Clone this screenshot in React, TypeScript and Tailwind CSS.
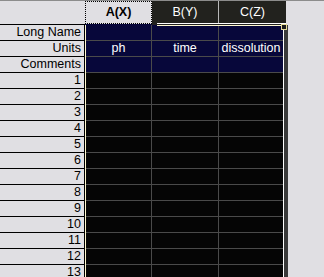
import React from 'react';

const labels = ['Long Name', 'Units', 'Comments', ...Array.from({ length: 14 }, (_, i) => String(i + 1))];

const units: Record<string, string[]> = {
  Units: ['ph', 'time', 'dissolution'],
};

function Row({ label, idx }: { label: string; idx: number }) {
  const meta = idx < 3;
  const bg = meta ? 'bg-[#07073a]' : 'bg-[#050505]';
  const vals = units[label] ?? ['', '', ''];
  return (
    <div className="flex h-[16px]">
      <div className="w-[85px] shrink-0 border-r border-b border-black bg-[#e0dfe3] pr-[3px] text-right text-[12.5px] leading-[15px] text-black">
        {label}
      </div>
      <div className="w-[1px] shrink-0 bg-[#fff8d0]" />
      <div className={`w-[66px] shrink-0 border-r border-b border-[#4a4a4a] ${bg} text-center text-[12.5px] leading-[15px] text-white`}>
        {vals[0]}
      </div>
      <div className={`w-[67px] shrink-0 border-r border-b border-[#4a4a4a] ${bg} text-center text-[12.5px] leading-[15px] text-white`}>
        {vals[1]}
      </div>
      <div className={`flex w-[64px] shrink-0 justify-center overflow-hidden whitespace-nowrap border-b border-[#4a4a4a] ${bg} text-[12.5px] leading-[15px] text-white`}>
        <span className="shrink-0">{vals[2]}</span>
      </div>
      <div className="w-[1px] shrink-0 bg-white" />
      <div className="w-[4px] shrink-0 bg-[#3a3a3a]" />
      <div className="flex-1 bg-[#e0dfe3]" />
    </div>
  );
}

export default function App() {
  return (
    <div
      className="relative h-[277px] w-[324px] overflow-hidden border-t border-[#8c8c8c] bg-[#e0dfe3]"
      style={{ fontFamily: '"Liberation Sans", Arial, sans-serif' }}
    >
      {/* column headers */}
      <div className="flex h-[24px]">
        <div className="w-[85px] shrink-0 border-b border-black" />
        <div className="flex w-[67px] shrink-0 flex-col">
          <div className="flex h-[23px] items-center justify-center border border-dotted border-black bg-[#e0dfe3] text-[12.5px] font-bold text-black">
            A(X)
          </div>
          <div className="h-[1px] bg-[#07073a]" />
        </div>
        <div className="flex w-[134px] shrink-0 flex-col bg-[#22221e]">
          <div className="flex h-[22px]">
            <div className="flex w-[66px] items-center justify-center text-[12.5px] text-white">B(Y)</div>
            <div className="w-[1px] bg-[#b8b8b8]" />
            <div className="flex flex-1 items-center justify-center text-[12.5px] text-white">C(Z)</div>
          </div>
          <div className="ml-[5px] h-[1px] bg-white" />
        </div>
        <div className="flex-1" />
      </div>

      {labels.map((l, i) => (
        <Row key={l} label={l} idx={i} />
      ))}

      {/* selection frame top edge + handle */}
      <div className="absolute left-[157px] top-[24px] h-[1px] w-[127px] bg-[#fff8d0]" />
      <div className="absolute left-[281px] top-[23px] h-[6px] w-[6px] border border-[#e6dc9a] bg-[#1a1a1a]" />
    </div>
  );
}
